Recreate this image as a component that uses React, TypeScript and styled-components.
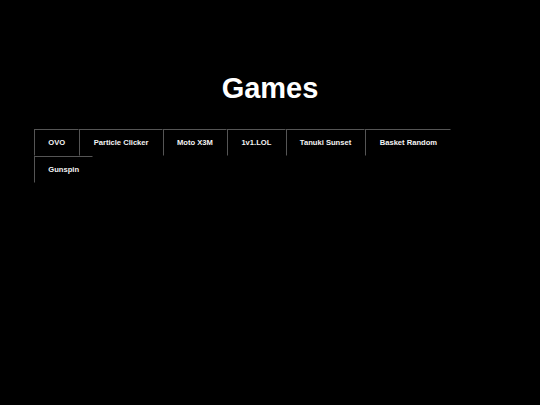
import React from "react";
import styled, { createGlobalStyle } from "styled-components";

const Global = createGlobalStyle`
  html, body { margin: 0; padding: 0; background: #000; }
  body { font-family: "Liberation Sans", Arial, sans-serif; color: #fff; }
`;

const Page = styled.main`
  min-height: 405px;
  background: #000;
  display: flex;
  flex-direction: column;
`;

const Title = styled.h1`
  margin: 72px 0 0;
  font-size: 29px;
  font-weight: 700;
  line-height: 33px;
  text-align: center;
  color: #fff;
`;

const GameList = styled.nav`
  margin-top: 24px;
  padding: 0 34px;
  display: flex;
  flex-wrap: wrap;
`;

const GameButton = styled.button`
  box-sizing: border-box;
  height: 27px;
  padding: 0 13.25px;
  display: flex;
  align-items: center;
  background: #000;
  color: #f4f4f4;
  font-family: "Liberation Sans", Arial, sans-serif;
  font-weight: 700;
  font-size: 7.6px;
  border-style: solid;
  border-width: 1px;
  border-color: #555 #000 #000 #555;
  cursor: pointer;
  white-space: nowrap;
`;

const games = [
  "OVO",
  "Particle Clicker",
  "Moto X3M",
  "1v1.LOL",
  "Tanuki Sunset",
  "Basket Random",
  "Gunspin",
];

export default function App() {
  return (
    <>
      <Global />
      <Page>
        <Title>Games</Title>
        <GameList>
          {games.map((g) => (
            <GameButton key={g}>{g}</GameButton>
          ))}
        </GameList>
      </Page>
    </>
  );
}
